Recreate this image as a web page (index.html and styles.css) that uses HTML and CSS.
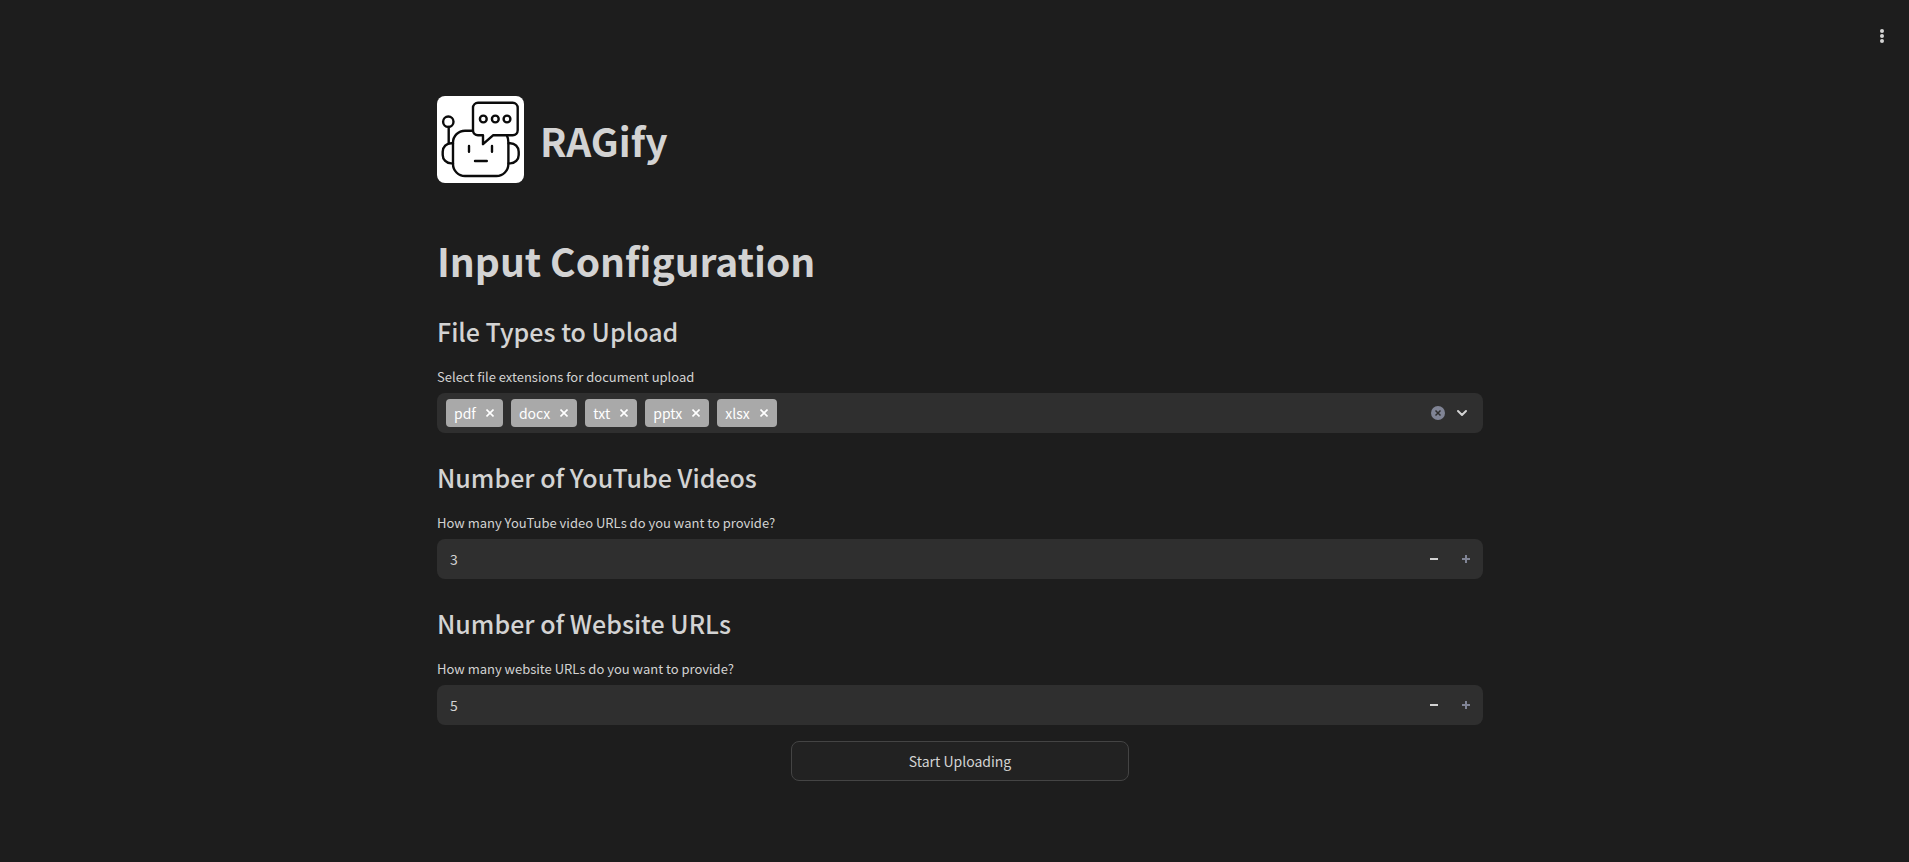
FILE: index.html
```html
<!DOCTYPE html>
<html lang="en">
<head>
<meta charset="utf-8">
<meta name="viewport" content="width=device-width, initial-scale=1">
<title>RAGify</title>
<link rel="stylesheet" href="styles.css">
</head>
<body>
<header class="toolbar">
  <button class="menu-button" type="button" aria-label="Main menu">
    <svg width="20" height="20" viewBox="0 0 20 20" fill="currentColor"><circle cx="10" cy="5" r="2"/><circle cx="10" cy="10" r="2"/><circle cx="10" cy="15" r="2"/></svg>
  </button>
</header>
<main class="content">
  <div class="brand">
    <svg class="logo" viewBox="0 0 87 87" fill="none" stroke="#0b0b0b" stroke-width="2.4" stroke-linecap="round" stroke-linejoin="round" aria-hidden="true">
      <rect width="87" height="87" fill="#fff" stroke="none"/>
      <circle cx="11.300" cy="25.700" r="5.200"/>
      <path d="M11.700 31v16M16 47.200h-1.800a8.500 8.500 0 0 0-8.500 8.500v3.200a8.500 8.500 0 0 0 8.500 8.500h1.800M71.500 47.200h1.700a8.500 8.500 0 0 1 8.500 8.500v3.200a8.500 8.500 0 0 1-8.500 8.500h-1.700"/>
      <path d="M37 34.700H28a12 12 0 0 0-12 12V68a12 12 0 0 0 12 12h31.400a12 12 0 0 0 12-12V46.500q0-4-1.500-7"/>
      <path d="M41 6.800H75.700a5 5 0 0 1 5 5v22.500a5 5 0 0 1-5 5H56L46 48.200v-8.900h-5a5 5 0 0 1-5-5V11.800a5 5 0 0 1 5-5z" fill="#fff"/>
      <circle cx="46.300" cy="23" r="3.400"/><circle cx="58.300" cy="23" r="3.400"/><circle cx="70" cy="23" r="3.400"/>
      <path d="M32 50v5.800M55 50v5.800M38 65h11.800"/>
    </svg>
    <h1 class="title">RAGify</h1>
  </div>
  <h1 class="title page-title">Input Configuration</h1>

  <section class="section">
    <h2 class="subtitle">File Types to Upload</h2>
    <label class="label" for="extensions">Select file extensions for document upload</label>
    <div class="field multiselect">
      <span class="tag">pdf<button class="tag-remove" type="button" aria-label="Remove pdf"><svg viewBox="0 0 8 8"><path d="M.500.500l7 7M7.500.500l-7 7"/></svg></button></span>
      <span class="tag">docx<button class="tag-remove" type="button" aria-label="Remove docx"><svg viewBox="0 0 8 8"><path d="M.500.500l7 7M7.500.500l-7 7"/></svg></button></span>
      <span class="tag">txt<button class="tag-remove" type="button" aria-label="Remove txt"><svg viewBox="0 0 8 8"><path d="M.500.500l7 7M7.500.500l-7 7"/></svg></button></span>
      <span class="tag">pptx<button class="tag-remove" type="button" aria-label="Remove pptx"><svg viewBox="0 0 8 8"><path d="M.500.500l7 7M7.500.500l-7 7"/></svg></button></span>
      <span class="tag">xlsx<button class="tag-remove" type="button" aria-label="Remove xlsx"><svg viewBox="0 0 8 8"><path d="M.500.500l7 7M7.500.500l-7 7"/></svg></button></span>
      <input class="search" id="extensions" type="text">
      <button class="icon-button clear" type="button" aria-label="Clear all">
        <svg width="14" height="14" viewBox="0 0 14 14"><circle cx="7" cy="7" r="7" fill="#808495"/><path d="M4.500 4.500l5 5M9.500 4.500l-5 5" stroke="#2f2f2f" stroke-width="1.500"/></svg>
      </button>
      <button class="icon-button" type="button" aria-label="Open options">
        <svg width="12" height="12" viewBox="0 0 12 12" fill="none" stroke="currentColor" stroke-width="2" stroke-linecap="round" stroke-linejoin="round"><path d="M2 4l4 4 4-4"/></svg>
      </button>
    </div>
  </section>

  <section class="section">
    <h2 class="subtitle">Number of YouTube Videos</h2>
    <label class="label" for="videos">How many YouTube video URLs do you want to provide?</label>
    <div class="field">
      <input class="number" id="videos" type="text" inputmode="numeric" value="3">
      <button class="step" type="button" aria-label="Decrease videos"><svg width="8" height="8" viewBox="0 0 8 8"><path d="M0 3h8v2H0z"/></svg></button>
      <button class="step step-muted" type="button" aria-label="Increase videos"><svg width="8" height="8" viewBox="0 0 8 8"><path d="M0 3h3V0h2v3h3v2H5v3H3V5H0z"/></svg></button>
    </div>
  </section>

  <section class="section">
    <h2 class="subtitle">Number of Website URLs</h2>
    <label class="label" for="websites">How many website URLs do you want to provide?</label>
    <div class="field">
      <input class="number" id="websites" type="text" inputmode="numeric" value="5">
      <button class="step" type="button" aria-label="Decrease websites"><svg width="8" height="8" viewBox="0 0 8 8"><path d="M0 3h8v2H0z"/></svg></button>
      <button class="step step-muted" type="button" aria-label="Increase websites"><svg width="8" height="8" viewBox="0 0 8 8"><path d="M0 3h3V0h2v3h3v2H5v3H3V5H0z"/></svg></button>
    </div>
  </section>

  <div class="actions">
    <button class="start" type="button">Start Uploading</button>
  </div>
</main>
</body>
</html>
```
FILE: styles.css
```css
* { box-sizing: border-box; }

body {
  margin: 0;
  min-height: 100vh;
  background: #1d1d1d;
  color: #d3d3d3;
  font-family: "Source Sans Pro", "Noto Sans CJK SC", "Noto Sans", sans-serif;
  font-size: 14px;
}

button, input { font: inherit; color: inherit; }

button {
  display: flex;
  align-items: center;
  justify-content: center;
  padding: 0;
  border: 0;
  background: none;
  cursor: pointer;
}

.toolbar {
  display: flex;
  justify-content: flex-end;
  height: 96px;
  padding: 22px 13px;
}

.menu-button { width: 28px; height: 28px; }

.content {
  width: calc(100% - 32px);
  max-width: 1057px;
  margin: 0 auto;
  padding: 0 0 32px 11px;
}

.brand {
  display: flex;
  align-items: center;
  gap: 16px;
}

.logo {
  width: 87px;
  height: 87px;
  border-radius: 8px;
}

.title {
  margin: 0;
  font-size: 39px;
  font-weight: 700;
  line-height: 52px;
}

.page-title { margin-top: 51px; }

.section { margin-top: 23px; }

.page-title + .section { margin-top: 25px; }

.subtitle {
  margin: 0;
  font-size: 25px;
  font-weight: 500;
  line-height: 40px;
}

.label {
  display: block;
  margin: 16px 0 6px;
  font-size: 13px;
  line-height: 20px;
}

.field {
  display: flex;
  align-items: center;
  height: 40px;
  overflow: hidden;
  border-radius: 8px;
  background: #2f2f2f;
}

.field + .label { margin-top: 16px; }

.section + .section { margin-top: 24px; }

.multiselect {
  gap: 8px;
  padding: 0 11px 0 9px;
}

.tag {
  display: flex;
  align-items: center;
  gap: 10px;
  height: 28px;
  padding: 0 9px 0 8px;
  border-radius: 4px;
  background: #a9a9a9;
  color: #fff;
}

.tag-remove { width: 8px; height: 8px; }

.tag-remove svg {
  width: 8px;
  height: 8px;
  fill: none;
  stroke: currentColor;
  stroke-width: 1.6;
}

.search, .number {
  flex: 1;
  min-width: 0;
  height: 40px;
  padding: 0;
  border: 0;
  outline: 0;
  background: none;
}

.number { padding: 0 13px; }

.icon-button { width: 20px; height: 20px; }

.clear { margin-right: -4px; }

.step { width: 32px; height: 40px; }

.step:last-child { margin-right: 1px; }

.step svg { fill: currentColor; }

.step-muted { color: #808495; }

.actions {
  display: grid;
  grid-template-columns: repeat(3, 1fr);
  gap: 16px;
  margin-top: 16px;
}

.start {
  grid-column: 2;
  height: 40px;
  border: 1px solid #444;
  border-radius: 8px;
  background: #222;
}
```
